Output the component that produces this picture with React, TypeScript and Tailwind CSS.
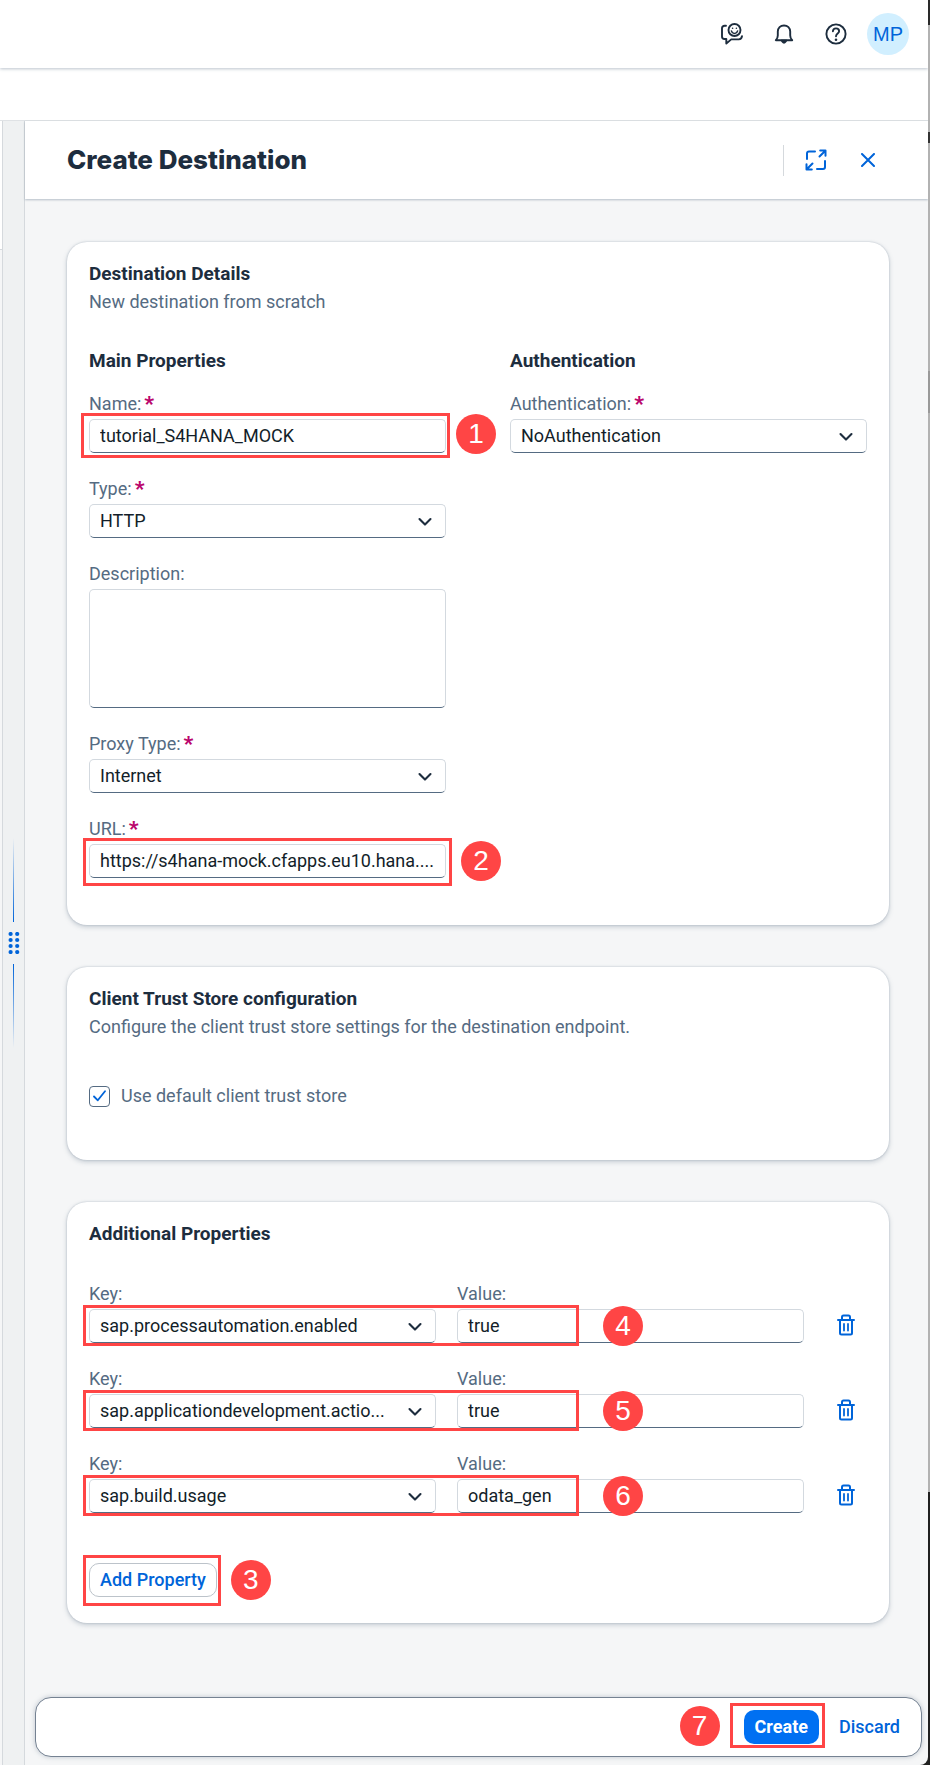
import type { ReactNode } from "react";

const controlClass =
  "block h-[34px] w-full appearance-none rounded-[5px] border border-[#d3d9df] border-b-[#556b82] bg-white px-[10px] text-lg leading-7 text-[#131e29] outline-none";

const inputClass =
  "block h-[34px] w-full appearance-none rounded-[5px] border border-[#d3d9df] border-b-[#556b82] bg-white px-[10px] pb-[2px] text-lg leading-7 text-[#131e29] outline-none";

const headingClass = "text-[19px] font-bold leading-7";

function ChevronDown() {
  return (
    <svg className="pointer-events-none absolute right-[14px] top-[13px]" width="14" height="10" viewBox="0 0 14 10" fill="none" stroke="#1d2d3e" strokeWidth="2.1" strokeLinecap="round" strokeLinejoin="round" aria-hidden="true">
      <path d="M1.500 2 7 7.600 12.500 2" />
    </svg>
  );
}

function Badge({ n, className }: { n: number; className: string }) {
  return (
    <span className={`pointer-events-none absolute z-10 flex size-10 items-center justify-center rounded-full bg-[#ff4545] font-['Liberation_Sans',sans-serif] text-[28px] leading-none text-white ${className}`}>
      {n}
    </span>
  );
}

function Outline({ className }: { className: string }) {
  return <span className={`pointer-events-none absolute z-10 border-[3px] border-[#ff4545] ${className}`} />;
}

function Field({ id, label, required, children }: { id: string; label: string; required?: boolean; children: ReactNode }) {
  return (
    <div className="min-w-0">
      <label htmlFor={id} className="mb-px flex h-7 items-center text-lg leading-7 text-[#556b82]">
        {label}:
        {required && <span className="ml-[3px] text-[21px] font-black leading-7 text-[#ba066c]">*</span>}
      </label>
      <div className="relative">{children}</div>
    </div>
  );
}

function SelectBox({ id, value }: { id: string; value: string }) {
  return (
    <>
      <select id={id} defaultValue={value} className={controlClass}>
        <option>{value}</option>
      </select>
      <ChevronDown />
    </>
  );
}

function Card({ title, subtitle, className, children }: { title: string; subtitle?: string; className: string; children: ReactNode }) {
  return (
    <section className={`rounded-[20px] bg-white px-[22px] pt-[18px] shadow-[0_0_2px_rgba(85,107,130,0.35),0_2px_5px_rgba(85,107,130,0.3)] ${className}`}>
      <h2 className={headingClass}>{title}</h2>
      {subtitle && <p className="text-lg leading-7 text-[#556b82]">{subtitle}</p>}
      {children}
    </section>
  );
}

function TrashIcon() {
  return (
    <svg width="20" height="22" viewBox="0 0 20 22" fill="none" stroke="#0064d9" strokeWidth="2" strokeLinejoin="round" strokeLinecap="round" aria-hidden="true">
      <path d="M2 6h16M6 6V3.200C6 2.200 6.600 1.600 7.500 1.600h5c.9 0 1.500.6 1.500 1.600V6M4 6v13c0 1 .5 1.500 1.500 1.500h9c1 0 1.500-.5 1.500-1.500V6" />
      <path d="M8 10v6.500M12 10v6.500" strokeWidth="1.800" />
    </svg>
  );
}

const properties = [
  { key: "sap.processautomation.enabled", value: "true", step: 4 },
  { key: "sap.applicationdevelopment.actio...", value: "true", step: 5 },
  { key: "sap.build.usage", value: "odata_gen", step: 6 },
];

function TopBar() {
  return (
    <header className="relative z-10 flex h-[68px] shrink-0 items-center justify-end gap-[10px] bg-white pr-[19px] shadow-[0_1px_3px_rgba(85,107,130,0.4)]">
      <button aria-label="Feedback" className="flex size-[42px] items-center justify-center">
        <svg width="22" height="22" viewBox="0 0 22 22" fill="none" stroke="#1d2d3e" strokeWidth="1.900" strokeLinecap="round" strokeLinejoin="round">
          <path d="M5 2.800H3.600C2 2.800 1 3.800 1 5.300v8.200C1 15 2 16 3.500 16h1.800v4.600L10.200 16.400h7.600c1.900 0 2.900-1 3.200-3.200" />
          <circle cx="13.500" cy="7" r="6" />
          <path d="M10.400 7.900c.5 1.700 1.600 2.500 3.100 2.500s2.600-.8 3.100-2.500" strokeWidth="1.500" />
          <path d="M11.600 5.200v.1M15.400 5.200v.1" strokeWidth="1.600" />
        </svg>
      </button>
      <button aria-label="Notifications" className="flex size-[42px] items-center justify-center">
        <svg width="20" height="20" viewBox="0 0 20 20" fill="none" stroke="#1d2d3e" strokeWidth="1.900" strokeLinecap="round" strokeLinejoin="round">
          <path d="M1.800 16.200h16.400c-1.500-1.500-2-2.700-2-4.800V7.600C16.200 3.900 13.600 1.500 10 1.500S3.800 3.900 3.800 7.600v3.800c0 2.100-.5 3.300-2 4.800Z" />
          <path d="M7.200 16.500c.4 1.700 1.400 2.700 2.800 2.700s2.400-1 2.800-2.700Z" fill="#1d2d3e" strokeWidth=".8" />
        </svg>
      </button>
      <button aria-label="Help" className="flex size-[42px] items-center justify-center">
        <svg width="22" height="22" viewBox="0 0 22 22" fill="none" stroke="#1d2d3e" strokeWidth="1.900" strokeLinecap="round" strokeLinejoin="round">
          <circle cx="11" cy="11" r="9.600" />
          <path d="M7.900 8.300c.1-1.800 1.300-2.900 3.100-2.900s3.100 1.100 3.100 2.800c0 2.300-3.100 2.300-3.100 5" />
          <path d="M11 16.700v.1" strokeWidth="2.600" />
        </svg>
      </button>
      <button aria-label="Profile" className="flex size-[42px] items-center justify-center rounded-full bg-[#d1efff] font-['Liberation_Sans',sans-serif] text-xl text-[#0064d9]">
        MP
      </button>
    </header>
  );
}

function Splitter() {
  return (
    <div className="flex w-[23px] shrink-0 flex-col items-center justify-center gap-[10px] border-x border-[#d5d9dd] bg-[#eff1f2]">
      <div className="h-[84px] w-px bg-linear-to-b from-transparent to-[#0064d9]" />
      <svg width="12" height="22" viewBox="0 0 12 22" fill="#0064d9" aria-hidden="true">
        {[2, 8, 14, 20].map((y) => (
          <g key={y}>
            <circle cx="2.600" cy={y} r="2.100" />
            <circle cx="9.200" cy={y} r="2.100" />
          </g>
        ))}
      </svg>
      <div className="h-[84px] w-px bg-linear-to-b from-[#0064d9] to-transparent" />
    </div>
  );
}

function PanelHeader() {
  return (
    <div className="relative flex h-[78px] shrink-0 items-center bg-white pl-[42px] pr-[39px] shadow-[0_1px_2px_rgba(85,107,130,0.4)]">
      <h1 className="flex-1 font-[Inter,sans-serif] text-[26px] font-extrabold leading-8">Create Destination</h1>
      <div className="h-[31px] w-px bg-[#d5d9dd]" />
      <button aria-label="Full screen" className="ml-[11px] flex size-[42px] items-center justify-center">
        <svg width="22" height="22" viewBox="0 0 22 22" fill="none" stroke="#0064d9" strokeWidth="2" strokeLinecap="round" strokeLinejoin="round">
          <path d="M10 2.500H4C2.700 2.500 2 3.200 2 4.500V10M20 12v6c0 1.300-.7 2-2 2h-6" />
          <path d="M15.200 1.500h5.300v5.300M19.800 2.200 14.500 7.500M6.800 20.500H1.500v-5.300M2.200 19.800l5.300-5.300" />
        </svg>
      </button>
      <button aria-label="Close" className="ml-[10px] flex size-[42px] items-center justify-center">
        <svg width="14" height="14" viewBox="0 0 14 14" fill="none" stroke="#0064d9" strokeWidth="2" strokeLinecap="round">
          <path d="M1 1l12 12M13 1 1 13" />
        </svg>
      </button>
    </div>
  );
}

export default function App() {
  return (
    <div className="flex min-h-screen bg-[#202020] font-[Roboto,sans-serif] text-[#1d2d3e]">
      <div className="flex min-w-0 flex-1 flex-col overflow-hidden rounded-br-[8px] bg-[#f5f6f7]">
        <TopBar />
        <div className="h-[53px] shrink-0 border-b border-[#dfe2e5] bg-white" />
        <div className="flex flex-1">
          <div className="w-[2px] shrink-0">
            <div className="h-[129px] border-b border-[#d5d9dd] bg-white" />
          </div>
          <Splitter />
          <main className="flex min-w-0 flex-1 flex-col">
            <PanelHeader />
            <div className="flex flex-1 flex-col gap-[42px] pb-[74px] pl-[42px] pr-[39px] pt-[43px]">
              <Card title="Destination Details" subtitle="New destination from scratch" className="pb-[47px]">
                <div className="mt-[31px] grid grid-cols-2 gap-x-16">
                  <div className="flex min-w-0 flex-col gap-[22px]">
                    <div>
                      <h3 className={`mb-[15px] ${headingClass}`}>Main Properties</h3>
                      <Field id="name" label="Name" required>
                        <input id="name" defaultValue="tutorial_S4HANA_MOCK" className={inputClass} />
                        <Outline className="-bottom-[5px] -left-2 -right-1 -top-[6px]" />
                        <Badge n={1} className="left-full -top-[5px] ml-[10px]" />
                      </Field>
                    </div>
                    <Field id="type" label="Type" required>
                      <SelectBox id="type" value="HTTP" />
                    </Field>
                    <Field id="description" label="Description">
                      <textarea id="description" className="block h-[119px] w-full resize-none rounded-[5px] border border-[#d3d9df] border-b-[#556b82] bg-white px-[10px] py-1 text-lg outline-none" />
                    </Field>
                    <Field id="proxy" label="Proxy Type" required>
                      <SelectBox id="proxy" value="Internet" />
                    </Field>
                    <Field id="url" label="URL" required>
                      <input id="url" defaultValue="https://s4hana-mock.cfapps.eu10.hana...." className={inputClass} />
                      <Outline className="-inset-x-[6px] -bottom-2 -top-[6px]" />
                      <Badge n={2} className="left-full -top-[3px] ml-[15px]" />
                    </Field>
                  </div>
                  <div className="min-w-0">
                    <h3 className={`mb-[15px] ${headingClass}`}>Authentication</h3>
                    <Field id="auth" label="Authentication" required>
                      <SelectBox id="auth" value="NoAuthentication" />
                    </Field>
                  </div>
                </div>
              </Card>

              <Card title="Client Trust Store configuration" subtitle="Configure the client trust store settings for the destination endpoint." className="pb-[50px]">
                <label className="mt-[41px] flex items-center gap-[11px] text-lg leading-7 text-[#556b82]">
                  <span className="relative flex size-[21px] items-center justify-center">
                    <input type="checkbox" defaultChecked className="peer size-[21px] appearance-none rounded-[4px] border border-[#556b82] bg-white" />
                    <svg className="pointer-events-none absolute hidden peer-checked:block" width="13" height="12" viewBox="0 0 13 12" fill="none" stroke="#0064d9" strokeWidth="1.800" strokeLinecap="round" strokeLinejoin="round" aria-hidden="true">
                      <path d="M1 6.500 4.800 10.300 12 1.200" />
                    </svg>
                  </span>
                  Use default client trust store
                </label>
              </Card>

              <Card title="Additional Properties" className="pb-[26px]">
                <div className="mt-8 flex flex-col gap-[22px]">
                  {properties.map((p) => (
                    <div key={p.step} className="relative flex items-end gap-[21px]">
                      <div className="min-w-0 flex-1">
                        <Field id={`key-${p.step}`} label="Key">
                          <SelectBox id={`key-${p.step}`} value={p.key} />
                        </Field>
                      </div>
                      <div className="min-w-0 flex-1">
                        <Field id={`value-${p.step}`} label="Value">
                          <input id={`value-${p.step}`} defaultValue={p.value} className={inputClass} />
                        </Field>
                      </div>
                      <button aria-label="Delete property" className="flex h-[36px] w-[42px] items-center justify-center">
                        <TrashIcon />
                      </button>
                      <Outline className="-bottom-[3px] -left-[6px] h-[41px] w-[496px]" />
                      <Badge n={p.step} className="-bottom-[3px] left-[514px]" />
                    </div>
                  ))}
                </div>
                <div className="relative mt-[50px] w-fit">
                  <button className="block h-[34px] rounded-[10px] border border-[#bcc3ca] bg-white px-[10px] text-lg font-medium leading-7 text-[#0064d9]">
                    Add Property
                  </button>
                  <Outline className="-bottom-[9px] -left-[6px] -right-1 -top-2" />
                  <Badge n={3} className="-bottom-[3px] left-full ml-[14px]" />
                </div>
              </Card>
            </div>

            <footer className="mb-2 ml-[10px] mr-[6px] flex h-[60px] shrink-0 items-center justify-end gap-[9px] rounded-[16px] border border-[#758292] bg-white pr-[10px] shadow-[0_0_5px_rgba(85,107,130,0.35)]">
              <div className="relative">
                <button className="block h-[34px] rounded-[10px] bg-[#0070f2] px-[11px] text-lg font-bold leading-7 text-white">Create</button>
                <Outline className="-bottom-1 -left-[14px] -right-[6px] -top-[7px]" />
                <Badge n={7} className="-top-1 right-full mr-6" />
              </div>
              <button className="h-[34px] px-[11px] text-lg font-medium leading-7 text-[#0064d9]">Discard</button>
            </footer>
          </main>
        </div>
      </div>
      <div className="flex w-[2px] shrink-0 flex-col">
        <div className="h-[25px] bg-[#2a2a2a]" />
        <div className="h-[107px] bg-[#b2b2b2]" />
        <div className="h-[11px] bg-[#333333]" />
        <div className="h-[228px] bg-[#b2b2b2]" />
        <div className="h-[42px] bg-[#999999]" />
        <div className="flex-1 bg-[#b2b2b2]" />
        <div className="h-[273px] bg-[#202020]" />
      </div>
    </div>
  );
}
